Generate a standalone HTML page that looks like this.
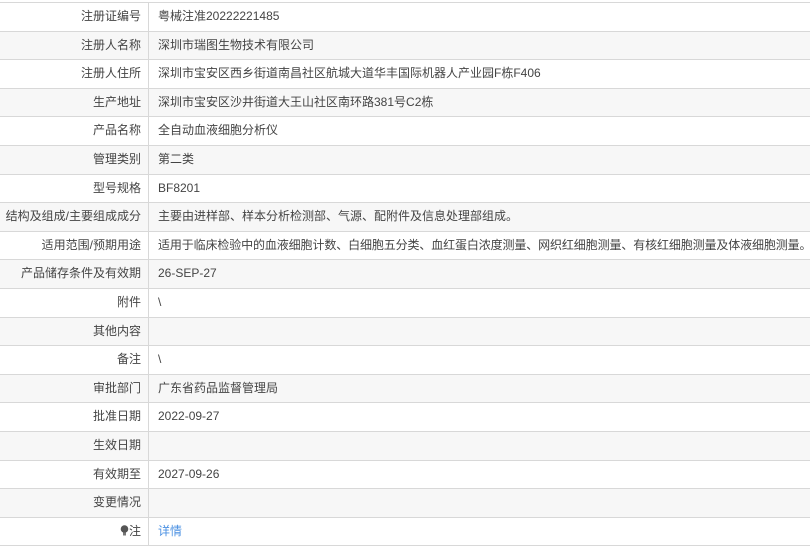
<!DOCTYPE html>
<html><head><meta charset="utf-8"><style>
html,body{margin:0;padding:0;background:#fff;width:810px;height:549px;overflow:hidden}
body{font-family:"Liberation Sans","Noto Sans CJK SC",sans-serif;font-size:12px;color:#333}
.wrap{position:absolute;top:2px;left:0;width:810px}
.r{position:relative;height:27.6px;border-bottom:1px solid #d8d8d8;line-height:27.6px}
.r.g{background:#f7f7f7}
.r:first-child{border-top:1px solid #d8d8d8}
.l{position:absolute;left:0;top:0;width:141px;text-align:right;padding-right:7px;height:100%;border-right:1px solid #d8d8d8;color:#444}
.v{position:absolute;left:158px;top:0;white-space:nowrap;color:#444}
a{color:#4a90e2;text-decoration:none}
</style></head><body><div class="wrap">
<div class="r"><div class="l">注册证编号</div><div class="v">粤械注准20222221485</div></div>
<div class="r g"><div class="l">注册人名称</div><div class="v">深圳市瑞图生物技术有限公司</div></div>
<div class="r"><div class="l">注册人住所</div><div class="v">深圳市宝安区西乡街道南昌社区航城大道华丰国际机器人产业园F栋F406</div></div>
<div class="r g"><div class="l">生产地址</div><div class="v">深圳市宝安区沙井街道大王山社区南环路381号C2栋</div></div>
<div class="r"><div class="l">产品名称</div><div class="v">全自动血液细胞分析仪</div></div>
<div class="r g"><div class="l">管理类别</div><div class="v">第二类</div></div>
<div class="r"><div class="l">型号规格</div><div class="v">BF8201</div></div>
<div class="r g"><div class="l">结构及组成/主要组成成分</div><div class="v">主要由进样部、样本分析检测部、气源、配附件及信息处理部组成。</div></div>
<div class="r"><div class="l">适用范围/预期用途</div><div class="v" style="letter-spacing:-0.12px">适用于临床检验中的血液细胞计数、白细胞五分类、血红蛋白浓度测量、网织红细胞测量、有核红细胞测量及体液细胞测量。</div></div>
<div class="r g"><div class="l">产品储存条件及有效期</div><div class="v">26-SEP-27</div></div>
<div class="r"><div class="l">附件</div><div class="v">\</div></div>
<div class="r g"><div class="l">其他内容</div><div class="v"></div></div>
<div class="r"><div class="l">备注</div><div class="v">\</div></div>
<div class="r g"><div class="l">审批部门</div><div class="v">广东省药品监督管理局</div></div>
<div class="r"><div class="l">批准日期</div><div class="v">2022-09-27</div></div>
<div class="r g"><div class="l">生效日期</div><div class="v"></div></div>
<div class="r"><div class="l">有效期至</div><div class="v">2027-09-26</div></div>
<div class="r g"><div class="l">变更情况</div><div class="v"></div></div>
<div class="r"><div class="l"><svg width="9" height="11" viewBox="0 0 9 11" style="vertical-align:-1px"><circle cx="4.5" cy="4" r="3.8" fill="#555"/><rect x="3" y="7.5" width="3" height="3" fill="#777"/></svg>注</div><div class="v"><a>详情</a></div></div>
</div></body></html>
